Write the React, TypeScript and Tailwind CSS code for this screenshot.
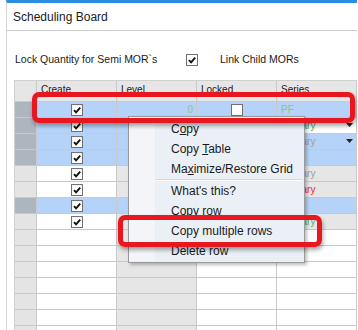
import React from 'react'

const BLUE = 'bg-[#b5d3f8]'
const LINE = 'border-[#c9c9c9]'

type Row = {
  sel: boolean
  data: boolean
  series?: string
  color?: string
  seriesBg?: string
  arrow?: boolean
}

const rows: Row[] = [
  { sel: true, data: true, series: 'PF', color: 'text-[#92c28c]', seriesBg: BLUE },
  { sel: true, data: true, series: 'Primary', color: 'text-[#5fae4f]', seriesBg: 'bg-white', arrow: true },
  { sel: true, data: true, series: 'Primary', color: 'text-[#9c9c9c]', seriesBg: BLUE, arrow: true },
  { sel: true, data: true, series: '', seriesBg: BLUE },
  { sel: false, data: true, series: 'Primary', color: 'text-[#9c9c9c]', seriesBg: 'bg-[#e6e6e6]' },
  { sel: false, data: true, series: 'Primary', color: 'text-[#f01c1c]', seriesBg: 'bg-[#e6e6e6]' },
  { sel: true, data: true, series: '', seriesBg: BLUE },
  { sel: false, data: true, series: 'Primary', color: 'text-[#5fae4f]', seriesBg: 'bg-[#e6e6e6]' },
  { sel: false, data: false },
  { sel: false, data: false },
  { sel: false, data: false },
  { sel: false, data: false },
  { sel: false, data: false },
  { sel: false, data: false },
  { sel: false, data: false },
]

function Check({ checked = true }: { checked?: boolean }) {
  return (
    <span className="flex h-[12px] w-[12px] items-center justify-center border border-[#707070] bg-white">
      {checked && (
        <svg width="10" height="10" viewBox="0 0 10 10">
          <path d="M2 5.2 L4.1 7.3 L8.2 2.6" fill="none" stroke="#111" strokeWidth="1.9" />
        </svg>
      )}
    </span>
  )
}

function RedBox({ className }: { className: string }) {
  return (
    <div
      className={`absolute rounded-[7px] border-[5px] border-[#e8161f] shadow-[1px_3px_4px_rgba(0,0,0,0.35)] ${className}`}
    />
  )
}

const menuItems: (React.ReactNode | null)[] = [
  <span>C<u>o</u>py</span>,
  <span>Copy <u>T</u>able</span>,
  <span>Ma<u>x</u>imize/Restore Grid</span>,
  null,
  <span>What's this?</span>,
  <span>Copy row</span>,
  <span>Copy multiple rows</span>,
  <span>Delete row</span>,
]

export default function App() {
  return (
    <div className="relative h-[330px] w-[358px] overflow-hidden bg-white font-['Liberation_Sans',Arial,sans-serif] text-[#1a1a1a]">
      <div className="ml-[6px] h-full w-[351px] border-l border-t-[3px] border-l-[#d6d6d6] border-t-[#2a8de0]">
        {/* Title */}
        <div className="h-[28px] border-b border-[#cbcbcb] pl-[6px] pt-[7px] text-[12px] leading-[14px]">
          Scheduling Board
        </div>

        {/* Options */}
        <div className="mt-[22px] flex h-[14px] items-center pl-[8px] text-[10.5px]">
          <span className="w-[171px]">Lock Quantity for Semi MOR`s</span>
          <Check />
          <span className="ml-[22px]">Link Child MORs</span>
        </div>

        {/* Grid */}
        <div className="ml-[7px] mt-[13px] border-l border-t border-[#d0d0d0] text-[10px]">
          <div className={`flex h-[21px] border-b ${LINE} bg-[#e6e6e6]`}>
            <div className={`w-[22px] border-r ${LINE}`} />
            {['Create', 'Level', 'Locked', 'Series'].map((h) => (
              <div key={h} className={`w-[80px] border-r ${LINE} pl-[4px] pt-[3px] leading-[12px]`}>
                {h}
              </div>
            ))}
          </div>

          {rows.map((r, i) => (
            <div key={i} className={`flex h-[16px] border-b ${LINE}`}>
              <div className={`w-[22px] border-r ${LINE} ${r.sel ? 'bg-[#adb5be]' : 'bg-[#e4e4e4]'}`} />
              <div className={`flex w-[80px] items-center justify-center border-r ${LINE} ${r.sel ? BLUE : 'bg-white'}`}>
                {r.data && <Check />}
              </div>
              <div
                className={`flex w-[80px] items-center justify-end border-r ${LINE} pr-[3px] text-[#92c28c] ${r.sel ? BLUE : 'bg-[#e6e6e6]'}`}
              >
                {i === 0 ? '0' : ''}
              </div>
              <div className={`flex w-[80px] items-center justify-center border-r ${LINE} ${r.sel ? BLUE : 'bg-white'}`}>
                {i === 0 && <Check checked={false} />}
              </div>
              <div
                className={`relative flex w-[80px] items-center border-r ${LINE} pl-[4px] ${r.color ?? ''} ${r.seriesBg ?? 'bg-white'}`}
              >
                {r.series}
                {r.arrow && (
                  <svg className="absolute right-[3px] top-[5px]" width="7" height="4" viewBox="0 0 7 4">
                    <path d="M0 0 H7 L3.5 4 Z" fill="#222" />
                  </svg>
                )}
              </div>
            </div>
          ))}
        </div>
      </div>

      {/* Context menu */}
      <div className="absolute left-[128px] top-[116px] flex w-[177px] border border-[#9a9a9a] bg-[#ebf0f6] pb-[1px] pt-[2px] text-[12px] shadow-[2px_2px_3px_rgba(0,0,0,0.25)]">
        <div className="w-[26px] bg-[#f3f5f8]" />
        <div className="flex-1">
          {menuItems.map((m, i) =>
            m === null ? (
              <div key={i} className="mr-[2px] h-[2px] border-t border-[#d4d7db] bg-white" />
            ) : (
              <div key={i} className="flex h-[20px] items-center pl-[16px]">
                {m}
              </div>
            )
          )}
        </div>
      </div>

      <RedBox className="left-[32px] top-[92px] h-[31px] w-[323px]" />
      <RedBox className="left-[118px] top-[215px] h-[32px] w-[204px]" />
    </div>
  )
}
